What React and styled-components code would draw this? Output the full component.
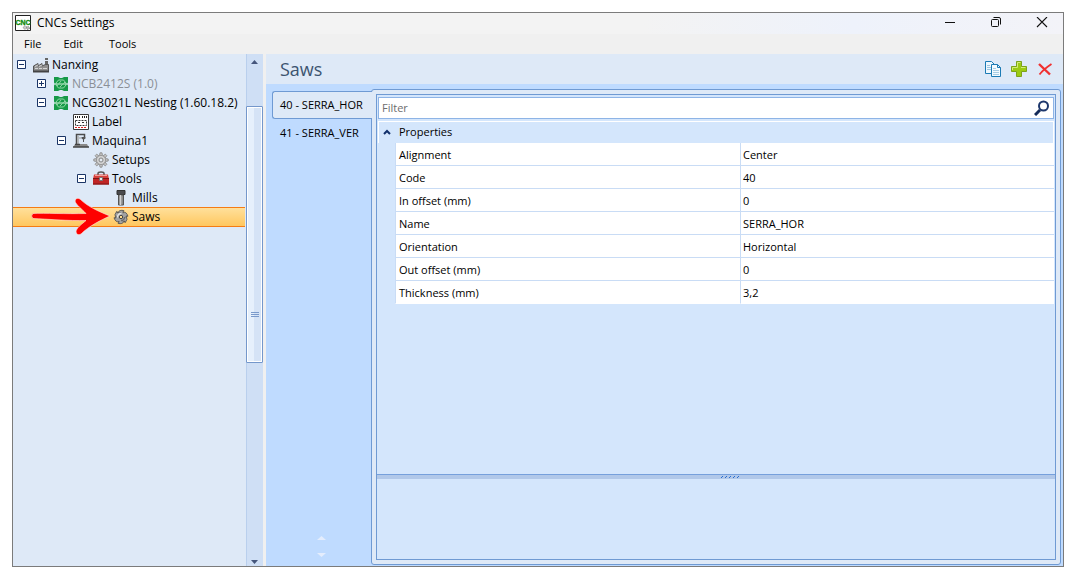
import React, { useState } from 'react'
import styled, { createGlobalStyle, css } from 'styled-components';

const tree = [
  { level: 0, label: 'Nanxing', icon: 'factory', toggle: 'minus' },
  { level: 1, label: 'NCB2412S (1.0)', icon: 'cnc', toggle: 'plus', muted: true },
  { level: 1, label: 'NCG3021L Nesting (1.60.18.2)', icon: 'cnc', toggle: 'minus' },
  { level: 2, label: 'Label', icon: 'label' },
  { level: 2, label: 'Maquina1', icon: 'machine', toggle: 'minus' },
  { level: 3, label: 'Setups', icon: 'gear' },
  { level: 3, label: 'Tools', icon: 'toolbox', toggle: 'minus' },
  { level: 4, label: 'Mills', icon: 'mill' },
  { level: 4, label: 'Saws', icon: 'saw', selected: true },
];

const saws = [
  { code: '40', name: 'SERRA_HOR', orientation: 'Horizontal' },
  { code: '41', name: 'SERRA_VER', orientation: 'Vertical' },
];

const gearTeeth = [0, 45, 90, 135, 180, 225, 270, 315];
const sawTeeth = [20, 80, 140, 200, 260, 320];

const icons = {
  factory: (
    <>
      <path d="M13.500 1v2M13.500 4v4" stroke="#666" strokeWidth="3" />
      <path d="M.5 14.500V9L5 6.500V9l4-2.500V9l3.500-1.500h3v7z" fill="#909090" stroke="#555" />
      <path d="M2 9.500l3-1.500M6 9.500l3-1.500M2 11.500h3M6 11.500h3M10 11.500h4" stroke="#d5d5d5" />
      <path d="M0 14.500h16" stroke="#444" strokeWidth="2" />
    </>
  ),
  cnc: (
    <>
      <path d="M1 1h4l2 1h2l2-1h4v14h-4l-2-1H7l-2 1H1z" fill="#169a48" />
      <path d="M1 6.500l1 1.500-1 1.500M15 6.500L14 8l1 1.500" fill="#dee9f7" />
      <path d="M5.500 4h5L13 7v2l-2.500 3h-5L3 9V7z" fill="none" stroke="#8fd6a5" />
      <path d="M2 8h12" stroke="#c9efd5" />
      <path d="M4 10l4-5M7 11l5-5" stroke="#8fd6a5" />
    </>
  ),
  label: (
    <>
      <path d="M.5.5h15v15H.5z" fill="#fff" stroke="#3b3b3b" />
      <path d="M2.500 2v3M4.500 2v3M6.500 2v3M9.500 2v3M11.500 2v3M13.500 2v3" stroke="#222" strokeDasharray="2 1" />
      <path d="M2.500 6.500h11v5h-11z" fill="none" stroke="#333" strokeDasharray="2 1" />
      <path d="M5 8.500h2M9 8.500h2" stroke="#333" />
      <path d="M2 13.500h12" stroke="#d22" strokeDasharray="2 1" />
    </>
  ),
  machine: (
    <>
      <path d="M3.500 12V1.500h8V4" fill="none" stroke="#4c4c4c" strokeWidth="1.500" />
      <path d="M5 3v9" stroke="#aaa" strokeWidth="1.500" />
      <path d="M7 4v2" stroke="#999" />
      <path d="M8.500 4h4v1.500l-1.500 1V9h-1V6.500l-1.500-1z" fill="#555" />
      <path d="M2 11h12l1.500 3H.5z" fill="#8a8a8a" />
      <path d="M2 11.500h5M0 14h16" stroke="#444" strokeWidth="1.500" />
    </>
  ),
  gear: (
    <>
      {gearTeeth.map(a => (
        <path key={a} d="M6.500 3.500 7 .8h2l.5 2.700z" fill="#c4c4c4" stroke="#888" strokeWidth=".8" transform={`rotate(${a} 8 8)`} />
      ))}
      <circle cx="8" cy="8" r="4.600" fill="#d2d2d2" stroke="#999" />
      <circle cx="8" cy="8" r="2" fill="#e4ebf3" stroke="#858585" />
    </>
  ),
  toolbox: (
    <>
      <path d="M5 4V2.500q0-1.500 3-1.500t3 1.500V4" fill="none" stroke="#555" strokeWidth="1.500" />
      <path d="M1 3.500h14L16 8H0z" fill="#d8403b" />
      <path d="M2 4.500h12" stroke="#f1a09a" />
      <path d="M0 8h16v5.500H0z" fill="#c02525" />
      <path d="M0 7.500h16" stroke="#7d1515" />
      <path d="M6.500 6.500h3v3h-3z" fill="#eee" stroke="#777" />
      <path d="M0 13h16" stroke="#7d1515" />
    </>
  ),
  mill: (
    <>
      <path d="M4 .5h8v4H4z" fill="#4a4a4d" stroke="#333" />
      <path d="M5.500 5h5v10h-5z" fill="#8b8b8b" stroke="#555" />
      <path d="M7.500 5v10" stroke="#d2d2d2" strokeWidth="1.500" />
    </>
  ),
  saw: (
    <>
      {sawTeeth.map(a => (
        <path key={a} d="M3.500 5Q4 1.500 8.500 1L8 3l3 1.500z" fill="#a5a5a5" stroke="#444" strokeWidth=".7" transform={`rotate(${a} 8 8)`} />
      ))}
      <circle cx="8" cy="8" r="4.700" fill="#a2a2a2" />
      <path d="M4.500 8.500q0-4 4-4" fill="none" stroke="#e4e4e4" strokeWidth="1.300" />
      <path d="M11.500 8q0 3.500-3.500 3.500" fill="none" stroke="#6a6a6a" strokeWidth="1.300" />
      <circle cx="8" cy="8" r="1.700" fill="#ffdc8c" stroke="#444" />
    </>
  ),
};

function Icon({ name }) {
  return <svg width="16" height="16" viewBox="0 0 16 16" aria-hidden="true">{icons[name]}</svg>
}

function Triangle({ down, width = 7 }) {
  return (
    <svg width={width} height="4" viewBox="0 0 7 4" preserveAspectRatio="none" aria-hidden="true">
      <path d={down ? 'M0 0h7L3.500 4z' : 'M0 4h7L3.500 0z'} fill="currentColor" />
    </svg>
  )
}

function TitleBar() {
  return (
    <Title>
      <svg width="16" height="16" viewBox="0 0 16 16" aria-hidden="true">
        <path d="M.5.5h15v15H.5z" fill="#fff" stroke="#222" />
        <text x="8" y="10" textAnchor="middle" fontFamily="Liberation Sans" fontSize="7" fontWeight="700" fill="#0a8a0a" stroke="#0a8a0a" strokeWidth=".3">CNC</text>
        <circle cx="10" cy="12.500" r="1.700" fill="#ccc" stroke="#888" strokeDasharray="1 1" />
        <circle cx="13" cy="13" r="1.500" fill="#bbb" stroke="#777" strokeDasharray="1 1" />
      </svg>
      <h1>CNCs Settings</h1>
      <WindowButton aria-label="Minimize">
        <svg width="12" height="12" viewBox="0 0 12 12"><path d="M1 5.500h10" stroke="#111" /></svg>
      </WindowButton>
      <WindowButton aria-label="Restore">
        <svg width="12" height="12" viewBox="0 0 12 12" fill="none" stroke="#111">
          <rect x="1.500" y="2.500" width="7" height="7" rx="1" />
          <path d="M3.500.5H9q1.500 0 1.500 1.500v5.500" />
        </svg>
      </WindowButton>
      <WindowButton aria-label="Close">
        <svg width="12" height="12" viewBox="0 0 12 12"><path d="M1 0l10 10M11 0 1 10" stroke="#111" strokeWidth="1.100" /></svg>
      </WindowButton>
    </Title>
  )
}

function MachineTree() {
  return (
    <Tree role="tree" aria-label="Machines">
      {tree.map(item => (
        <TreeRow key={item.label} role="treeitem" $level={item.level} $muted={item.muted} $selected={item.selected} aria-selected={!!item.selected}>
          {item.toggle ? (
            <Toggle aria-label={`Toggle ${item.label}`}>
              <svg width="9" height="9" viewBox="0 0 9 9" stroke="#1b3566">
                <path d="M.5.5h8v8h-8z" fill="#fff" />
                <path d={item.toggle === 'plus' ? 'M2 4.500h5M4.500 2v5' : 'M2 4.500h5'} />
              </svg>
            </Toggle>
          ) : <ToggleSpace />}
          <Icon name={item.icon} />
          <span>{item.label}</span>
          {item.selected && (
            <Pointer width="80" height="38" viewBox="0 0 80 38" aria-hidden="true">
              <path d="M2 15.500C14 15 34 16 55 15.500C51 11 45 7 44 3Q45-1 49 1C57 9 69 14 79 18C70 22 58 28 50 36Q46 38 45 34C45 30 51 26 55 22.500C38 23 15 21 2 20.500Q-1 18 2 15.500z" fill="#fe0000" stroke="#ffe9df" strokeWidth=".6" />
            </Pointer>
          )}
        </TreeRow>
      ))}
    </Tree>
  )
}

function ScrollBar() {
  return (
    <Scroll>
      <ScrollButton aria-label="Scroll up"><Triangle /></ScrollButton>
      <ScrollSpace $grow={36} />
      <Thumb>
        <svg width="8" height="6" viewBox="0 0 8 6"><path d="M0 .5h8M0 2.500h8M0 4.500h8" stroke="#7a9acb" /></svg>
      </Thumb>
      <ScrollSpace $grow={196} />
      <ScrollButton $short aria-label="Scroll down"><Triangle down /></ScrollButton>
    </Scroll>
  )
}

function PropertyGrid({ saw, filter }) {
  const rows = [
    ['Alignment', 'Center'],
    ['Code', saw.code],
    ['In offset (mm)', '0'],
    ['Name', saw.name],
    ['Orientation', saw.orientation],
    ['Out offset (mm)', '0'],
    ['Thickness (mm)', '3,2'],
  ].filter(([name]) => name.toLowerCase().includes(filter.toLowerCase()));

  return (
    <>
      <GroupButton aria-expanded="true">
        <svg width="8" height="6" viewBox="0 0 8 6"><path d="M1 5l3-3 3 3" fill="none" stroke="#12306b" strokeWidth="2" /></svg>
        Properties
      </GroupButton>
      <Properties>
        <tbody>
          {rows.map(([name, value]) => (
            <tr key={name}>
              <th scope="row">{name}</th>
              <td>{value}</td>
            </tr>
          ))}
        </tbody>
      </Properties>
    </>
  )
}

function App() {
  const [active, setActive] = useState(0);
  const [filter, setFilter] = useState('');

  return (
    <>
      <GlobalStyle />
      <Window>
        <TitleBar />
        <Menu>
          <button>File</button>
          <button>Edit</button>
          <button>Tools</button>
        </Menu>
        <Content>
          <MachineTree />
          <ScrollBar />
          <Main>
            <Header>
              <h2>Saws</h2>
              <ToolButton aria-label="Copy">
                <svg width="16" height="16" viewBox="0 0 16 16" stroke="#1c7bb5">
                  <path d="M.5.500h6l3 3v9h-9z" fill="#eef7fd" />
                  <path d="M2 4.500h3M2 6.500h5M2 8.500h5" stroke="#9cc5e0" />
                  <path d="M6.500 3.500h6l3 3v9h-9z" fill="#f3fafe" />
                  <path d="M12.500 3.500v3h3" fill="none" />
                  <path d="M8 7.500h3M8 9.500h6M8 11.500h6M8 13.500h6" stroke="#a8cde4" />
                </svg>
              </ToolButton>
              <ToolButton aria-label="Add">
                <svg width="16" height="16" viewBox="0 0 16 16">
                  <path d="M5.500.5h5v5h5v5h-5v5h-5v-5h-5v-5h5z" fill="#9ccb12" stroke="#7da31a" />
                  <path d="M6.500 6.500v-5h3M1.500 9V6.500h5M10 6.500h4.500" fill="none" stroke="#d5ec79" />
                </svg>
              </ToolButton>
              <ToolButton aria-label="Delete">
                <svg width="16" height="16" viewBox="0 0 16 16" fill="none" stroke="#f03030">
                  <path d="M2 3l11 10.500" strokeWidth="2.400" />
                  <path d="M14.500 3C10 6 6 9 2.500 13.500" strokeWidth="1.800" />
                </svg>
              </ToolButton>
            </Header>
            <Body>
              <TabColumn>
                <div role="tablist" aria-label="Saws">
                  {saws.map((saw, i) => (
                    <Tab key={saw.code} role="tab" $active={i === active} aria-selected={i === active} onClick={() => setActive(i)}>
                      {saw.code} - {saw.name}
                    </Tab>
                  ))}
                </div>
                <Spinner>
                  <button aria-label="Previous tab"><Triangle width={9} /></button>
                  <button aria-label="Next tab"><Triangle width={9} down /></button>
                </Spinner>
              </TabColumn>
              <Panel role="tabpanel">
                <Inner>
                  <Filter>
                    <input aria-label="Filter" placeholder="Filter" value={filter} onChange={e => setFilter(e.target.value)} />
                    <svg width="16" height="16" viewBox="0 0 16 16" fill="none" aria-hidden="true">
                      <circle cx="9.500" cy="6" r="4.500" stroke="#1d376c" strokeWidth="2" />
                      <path d="M6 10l-5 5" stroke="#152b59" strokeWidth="3" />
                    </svg>
                  </Filter>
                  <Grid>
                    <PropertyGrid saw={saws[active]} filter={filter} />
                  </Grid>
                  <Splitter>
                    <svg width="19" height="3" viewBox="0 0 19 3">
                      <path d="M0 3l2-2M4 3l2-2M8 3l2-2M12 3l2-2M16 3l2-2" stroke="#2a6fd0" />
                    </svg>
                  </Splitter>
                  <Description />
                </Inner>
              </Panel>
            </Body>
          </Main>
        </Content>
      </Window>
    </>
  )
}

const GlobalStyle = createGlobalStyle`
  * {
    box-sizing: border-box;
  }

  body {
    margin: 0;
    background: #fff;
    color: #000;
    font: 12px "Open Sans", "Noto Sans", sans-serif;
  }

  button {
    border: none;
    padding: 0;
    background: none;
    color: inherit;
    font: inherit;
  }

  svg {
    display: block;
    flex: none;
  }
`;

const Window = styled.div`
  height: calc(100vh - 25px);
  margin: 12px 6px 13px 12px;
  border: 1px solid #7b7b7b;
  display: flex;
  flex-direction: column;
  background: #f0f0f0;
`;

const Title = styled.header`
  height: 21px;
  padding: 0 15px 2px 2px;
  display: flex;
  align-items: center;
  background: linear-gradient(90deg, #f3f3f3 60%, #eef2fb 80%, #f3f3f8);

  h1 {
    flex: 1;
    margin: 0 0 0 6px;
    font-size: 12px;
    font-weight: 400;
  }
`;

const WindowButton = styled.button`
  width: 12px;
  height: 16px;
  margin-left: 34px;
`;

const Menu = styled.nav`
  height: 20px;
  padding: 0 0 2px 11px;
  display: flex;
  gap: 22px;
  font-size: 11px;

  button:last-child {
    margin-left: 4px;
  }
`;

const Content = styled.div`
  flex: 1;
  min-height: 0;
  display: flex;
`;

const Tree = styled.ul`
  width: 233px;
  margin: 0;
  padding: 1px 1px 0 0;
  list-style: none;
  background: #dee9f7;
`;

const TreeRow = styled.li`
  position: relative;
  height: 19px;
  padding-left: ${props => 4 + props.$level * 20}px;
  display: flex;
  align-items: center;
  white-space: nowrap;
  color: ${props => (props.$muted ? '#8a8f96' : '#000')};

  span {
    margin-left: 3px;
  }

  ${props => props.$selected && css`
    height: 20px;
    padding-bottom: 1px;
    border: solid #f57c14;
    border-width: 1px 0;
    background: linear-gradient(#ffe09b, #ffc75f);
  `}
`;

const Toggle = styled.button`
  width: 9px;
  margin-right: 7px;
`;

const ToggleSpace = styled.span`
  width: 13px;
`;

const Pointer = styled.svg`
  position: absolute;
  left: 18px;
  top: -10px;
`;

const Scroll = styled.div`
  width: 17px;
  border-left: 1px solid #b9cfed;
  display: flex;
  flex-direction: column;
  background: #cfdff5;
`;

const ScrollButton = styled.button`
  height: ${props => (props.$short ? 8 : 16)}px;
  padding-right: 1px;
  display: flex;
  align-items: center;
  justify-content: center;
  color: #45567c;
`;

const ScrollSpace = styled.div`
  flex: ${props => props.$grow};
`;

const Thumb = styled.div`
  flex: 256;
  margin-left: -1px;
  border: 1px solid #7497cb;
  border-radius: 1px;
  display: flex;
  align-items: flex-end;
  justify-content: center;
  background: linear-gradient(90deg, #e6f0fc 45%, #d5e3f6 45%);
  box-shadow: inset 0 0 0 1px #fff;

  svg {
    margin-bottom: 44px;
  }
`;

const Main = styled.main`
  flex: 1;
  min-width: 0;
  margin-left: 3px;
  display: flex;
  flex-direction: column;
  background: #bfdbff;
`;

const Header = styled.div`
  height: 30px;
  padding: 0 10px 0 14px;
  display: flex;
  align-items: center;
  gap: 10px;
  background: #dee9f7;

  h2 {
    flex: 1;
    margin: 0;
    font-size: 18px;
    font-weight: 400;
    color: #3c5470;
  }
`;

const ToolButton = styled.button`
  width: 16px;
  height: 16px;
`;

const Body = styled.div`
  flex: 1;
  min-height: 0;
  padding: 5px 2px 1px 6px;
  display: flex;
`;

const TabColumn = styled.div`
  width: 99px;
  padding-top: 2px;
  display: flex;
  flex-direction: column;
  justify-content: space-between;
`;

const Tab = styled.button`
  position: relative;
  width: 100px;
  height: 28px;
  padding: 0 0 2px 7px;
  border: 1px solid transparent;
  display: block;
  font-size: 11px;
  text-align: left;
  white-space: nowrap;

  ${props => props.$active && css`
    border-color: #6f9ad3;
    border-right: none;
    border-radius: 3px 0 0 3px;
    background: #dee9f7;
  `}
`;

const Spinner = styled.div`
  padding-bottom: 8px;
  display: flex;
  flex-direction: column;
  align-items: center;
  gap: 13px;
  color: #e4edfd;
`;

const Panel = styled.section`
  flex: 1;
  min-width: 0;
  padding: 4px;
  border: 1px solid #6f9ad3;
  border-radius: 3px;
  display: flex;
  background: #dee9f7;
`;

const Inner = styled.div`
  flex: 1;
  min-width: 0;
  border: 1px solid #6f9ad3;
  display: flex;
  flex-direction: column;
  background: #d4e6fc;
`;

const Filter = styled.div`
  height: 22px;
  margin: 2px 1px;
  padding: 0 3px;
  border: 1px solid #8eb4e6;
  display: flex;
  align-items: center;
  background: #fff;

  input {
    flex: 1;
    border: none;
    padding: 0 0 1px;
    outline: none;
    background: none;
    font: inherit;
    font-size: 11px;
  }

  input::placeholder {
    color: #6d6d6d;
  }
`;

const Grid = styled.div`
  flex: 353;
  min-height: 0;
  margin: 0 1px;
  font-size: 11px;
`;

const GroupButton = styled.button`
  width: 100%;
  height: 22px;
  padding: 0 0 2px 4px;
  border: solid #fff;
  border-width: 1px 1px 0;
  display: flex;
  align-items: center;
  gap: 8px;
`;

const Properties = styled.table`
  width: calc(100% - 17px);
  margin-left: 17px;
  border-spacing: 0;
  table-layout: fixed;
  background: #fff;

  th,
  td {
    height: 23px;
    padding: 0 2px;
    border: solid #c9dcf5;
    border-width: 0 0 1px 1px;
    font-weight: 400;
    text-align: left;
  }

  th {
    width: 345px;
    padding-left: 3px;
  }

  tr:last-child > * {
    border-bottom-color: #fff;
  }
`;

const Splitter = styled.div`
  height: 5px;
  padding-left: 28px;
  border-top: 1px solid #76a0dc;
  display: flex;
  justify-content: center;
  background: #b1c8e9;
`;

const Description = styled.div`
  flex: 80;
`;

export default App
